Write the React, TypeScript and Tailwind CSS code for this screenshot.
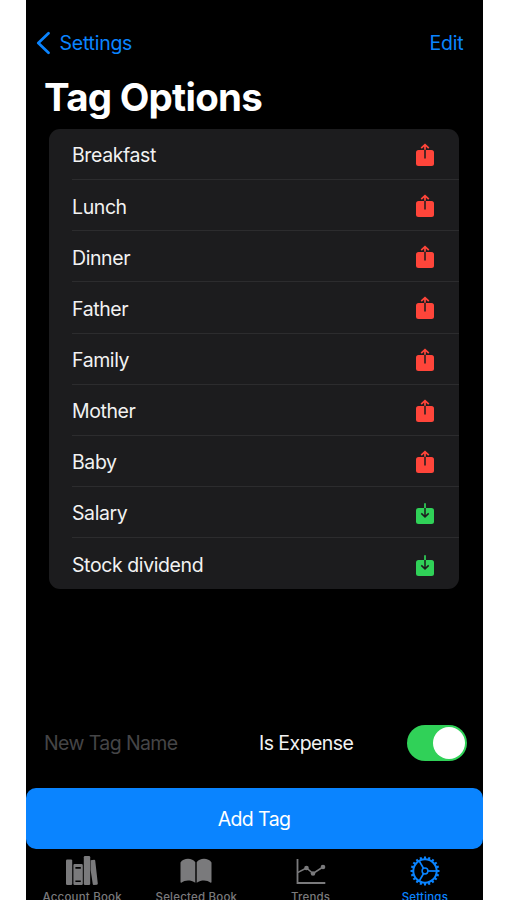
type Tag = { name: string; expense: boolean };

const tags: Tag[] = [
  { name: "Breakfast", expense: true },
  { name: "Lunch", expense: true },
  { name: "Dinner", expense: true },
  { name: "Father", expense: true },
  { name: "Family", expense: true },
  { name: "Mother", expense: true },
  { name: "Baby", expense: true },
  { name: "Salary", expense: false },
  { name: "Stock dividend", expense: false },
];

function ExpenseIcon() {
  return (
    <svg width="18" height="24" viewBox="0 0 18 24" fill="none">
      <rect x="0" y="7" width="18" height="16" rx="2.5" fill="#ff453a" />
      <path d="M9 6.5v9" stroke="#1c1c1e" strokeWidth="1.5" />
      <path d="M9 6.8V1.8M5.2 5.2L9 1.7L12.8 5.2" stroke="#ff453a" strokeWidth="1.7" />
    </svg>
  );
}

function IncomeIcon() {
  return (
    <svg width="18" height="24" viewBox="0 0 18 24" fill="none">
      <rect x="0" y="7" width="18" height="16" rx="2.5" fill="#30d158" />
      <path d="M9 7v8.6M5.3 12.4L9 15.9L12.7 12.4" stroke="#1c1c1e" strokeWidth="1.5" />
      <path d="M9 2.2V7" stroke="#30d158" strokeWidth="1.7" />
    </svg>
  );
}

function BooksIcon() {
  return (
    <svg width="34" height="30" viewBox="0 0 34 30" fill="#7a7a7c">
      <rect x="1" y="3.4" width="6.2" height="25.6" rx="1.2" />
      <path
        fillRule="evenodd"
        d="M9.6 8h7a1.2 1.2 0 0 1 1.2 1.2v18.6a1.2 1.2 0 0 1-1.2 1.2h-7a1.2 1.2 0 0 1-1.2-1.2V9.2a1.2 1.2 0 0 1 1.2-1.2zM10.4 11v1.7h5.4V11zM10.4 24.4v1.7h5.4v-1.7z"
      />
      <rect x="18.8" y="0" width="6.4" height="29" rx="1.2" />
      <path d="M25.6 4.2l3.6-.5q.8 0 1 .8l2.6 23q0 1-.8 1.2l-3.2.4q-.9 0-1-.8L25.6 14z" />
    </svg>
  );
}

function OpenBookIcon() {
  return (
    <svg width="32" height="26" viewBox="0 0 32 26" fill="#7a7a7c">
      <path d="M.5 4.5C2 2 5 .8 8 .8s6 1.2 7.3 3.4V24.8C13 23 10.5 22.4 8 22.4c-2.500 0-4.7.7-6.3 2.1-.7.5-1.2.2-1.2-.5z" />
      <path d="M31.5 4.5C30 2 27 .8 24 .8s-6 1.2-7.3 3.4V24.8C19 23 21.5 22.4 24 22.4c2.500 0 4.7.7 6.3 2.1.7.5 1.2.2 1.2-.5z" />
    </svg>
  );
}

function TrendsIcon() {
  return (
    <svg width="30" height="27" viewBox="0 0 30 27" fill="none" stroke="#7a7a7c">
      <path d="M1.5 1V25H29.3" strokeWidth="1.8" />
      <path d="M1.5 14.7L10.5 10L17 15.5L27 9" strokeWidth="1.5" />
      <g fill="#7a7a7c" stroke="none">
        <circle cx="10.5" cy="10" r="2.3" />
        <circle cx="17" cy="15.5" r="2.3" />
        <circle cx="27" cy="9" r="2.3" />
      </g>
    </svg>
  );
}

function GearIcon() {
  const teeth = Array.from({ length: 20 }, (_, i) => i * 18);
  return (
    <svg width="30" height="30" viewBox="-15 -15 30 30" fill="none" stroke="#0a84ff">
      <circle r="11.7" strokeWidth="2" />
      {teeth.map((a) => (
        <path key={a} d="M12 0H14.5" strokeWidth="2.1" transform={`rotate(${a})`} />
      ))}
      <circle r="2.9" strokeWidth="1.5" />
      {[0, 120, 240].map((a) => (
        <path key={a} d="M3 0H11.5" strokeWidth="1.7" transform={`rotate(${a})`} />
      ))}
    </svg>
  );
}

const tabs = [
  { label: "Account Book", icon: <BooksIcon />, active: false },
  { label: "Selected Book", icon: <OpenBookIcon />, active: false },
  { label: "Trends", icon: <TrendsIcon />, active: false },
  { label: "Settings", icon: <GearIcon />, active: true },
];

export default function App() {
  return (
    <div className="h-[900px] w-[507px] overflow-hidden bg-white pl-[25.5px] font-['Inter','Liberation_Sans',sans-serif]">
      <div className="flex h-full w-[457px] flex-col overflow-hidden bg-black text-[19.5px] text-[#f2f2f2]">
        {/* Navigation bar */}
        <header className="flex h-[68px] shrink-0 items-center justify-between pt-[18px] pr-[19px] pl-[10px] text-[#0a84ff]">
          <button className="flex items-center gap-[10px]">
            <svg width="14" height="24" viewBox="0 0 14 24" fill="none" stroke="currentColor" strokeWidth="2.7">
              <path d="M12.5 2.2L2.3 12L12.5 21.8" strokeLinecap="round" strokeLinejoin="round" />
            </svg>
            <span className="pt-[2px] tracking-[-0.25px]">Settings</span>
          </button>
          <button className="pt-[2px] tracking-[-0.2px]">Edit</button>
        </header>

        <h1 className="h-[61px] shrink-0 pt-[5px] pl-[18.5px] text-[38.5px] leading-[48px] font-bold tracking-[-0.75px] text-white">
          Tag Options
        </h1>

        {/* Tag list */}
        <ul className="mr-[24px] ml-[23px] h-[460px] shrink-0 rounded-[11px] bg-[#1c1c1e]">
          {tags.map((tag, i) => (
            <li key={tag.name} className="h-[51.15px] pl-[23.5px]">
              <div
                className={`flex h-full items-center justify-between pt-[2px] pr-[25px] ${
                  i < tags.length - 1 ? "border-b border-[#2c2c2e]" : ""
                }`}
              >
                <span className="pt-[2px] tracking-[-0.4px]">{tag.name}</span>
                {tag.expense ? <ExpenseIcon /> : <IncomeIcon />}
              </div>
            </li>
          ))}
        </ul>

        {/* New tag form */}
        <div className="mt-[127.5px] flex h-[52px] shrink-0 items-center pr-[16px] pl-[18.5px]">
          <span className="w-[215px] pt-[2px] tracking-[-0.6px] text-[#454547]">New Tag Name</span>
          <span className="pt-[2px] tracking-[-0.55px]">Is Expense</span>
          <span className="ml-auto flex h-[36px] w-[60px] items-center justify-end rounded-full bg-[#30d158] pr-[2px]">
            <span className="size-[32px] rounded-full bg-white" />
          </span>
        </div>
        <button className="mt-[19.5px] h-[61px] shrink-0 rounded-[10px] bg-[#0a84ff] pt-[2px] text-center tracking-[-0.6px] text-white">
          Add Tag
        </button>

        {/* Tab bar */}
        <nav className="grid shrink-0 grid-cols-4">
          {tabs.map((tab) => (
            <div
              key={tab.label}
              className={`flex flex-col items-center pt-[6px] pr-[1px] text-[11.5px] leading-[14px] font-medium tracking-[0.2px] whitespace-nowrap ${
                tab.active ? "text-[#0a84ff]" : "text-[#7a7a7c]"
              }`}
            >
              <span className="flex h-[32px] items-center">{tab.icon}</span>
              <span className="mt-[3px]">{tab.label}</span>
            </div>
          ))}
        </nav>
      </div>
    </div>
  );
}
